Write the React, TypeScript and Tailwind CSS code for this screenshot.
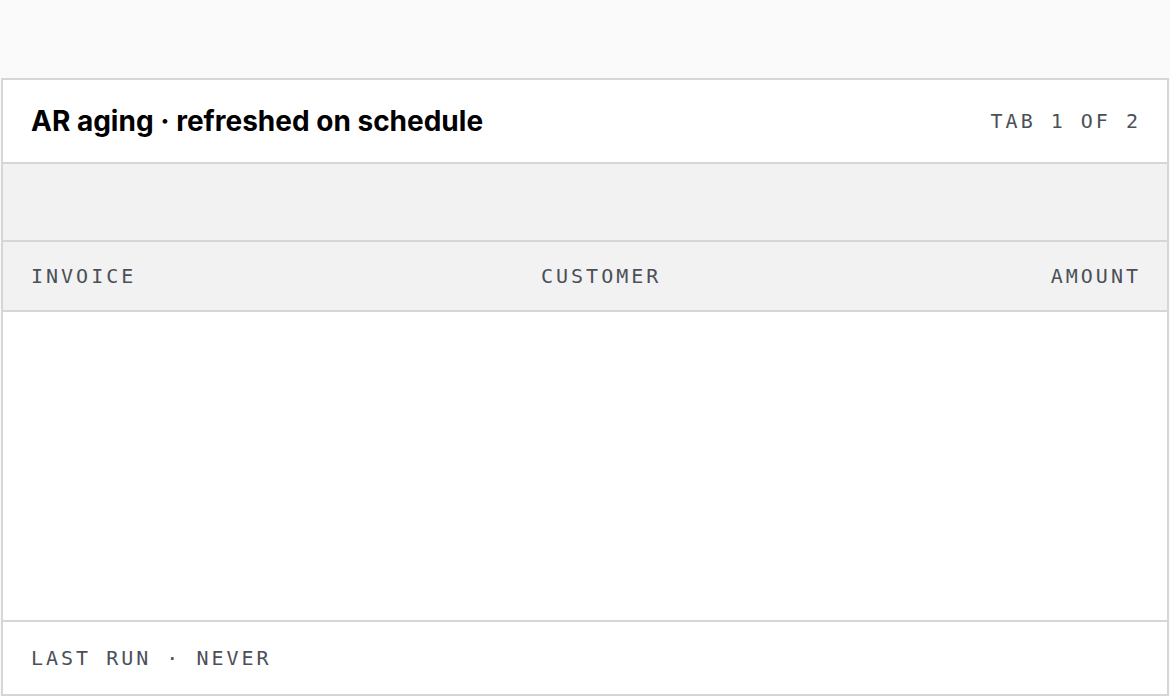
export default function App() {
  const mono = "font-['DejaVu_Sans_Mono','Liberation_Mono',monospace]";

  return (
    <div className="min-h-screen bg-[#fafafa] px-px pt-[78px]">
      <div className="border-2 border-[#d6d6d8] bg-white">
        <div className="flex h-[84px] items-center justify-between border-b-2 border-[#d6d6d8] pl-[28px] pr-[26px]">
          <h1 className="font-['Inter','Liberation_Sans',sans-serif] text-[28px] font-bold text-black">
            AR aging · refreshed on schedule
          </h1>
          <span className={`${mono} text-[20px] tracking-[0.15em] text-[#4b5058]`}>
            TAB 1 OF 2
          </span>
        </div>

        <div className="h-[78px] border-b-2 border-[#d6d6d8] bg-[#f2f2f3]" />

        <div
          className={`${mono} grid h-[70px] grid-cols-[510px_1fr_auto] items-center border-b-2 border-[#d6d6d8] bg-[#f2f2f3] pl-[28px] pr-[26px] text-[20px] tracking-[0.15em] text-[#4b5058]`}
        >
          <span>INVOICE</span>
          <span>CUSTOMER</span>
          <span className="text-right">AMOUNT</span>
        </div>

        <div className="h-[310px] border-b-2 border-[#d6d6d8]" />

        <div className={`${mono} flex h-[72px] items-center px-[28px] text-[20px] tracking-[0.15em] text-[#4b5058]`}>
          LAST RUN · NEVER
        </div>
      </div>
    </div>
  );
}
